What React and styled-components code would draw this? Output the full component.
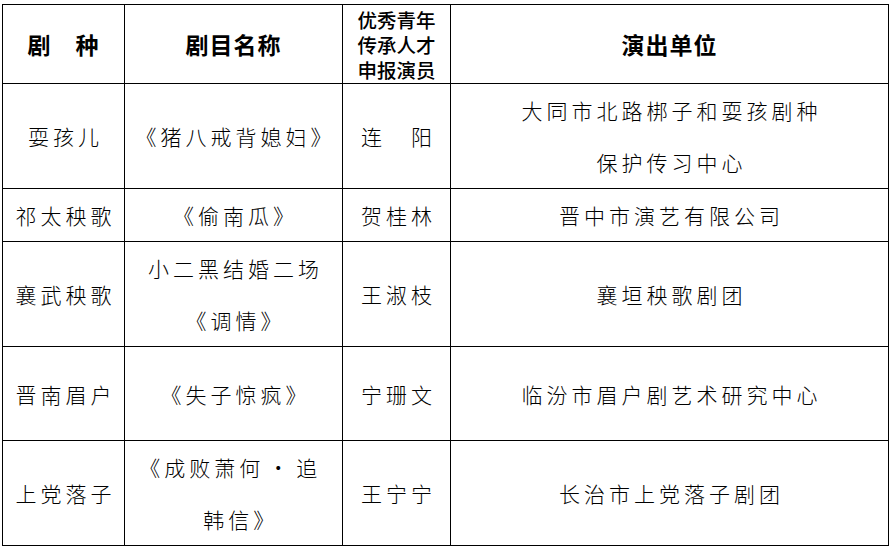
import React from "react";
import styled, { createGlobalStyle } from "styled-components";

const Global = createGlobalStyle`
  html, body { margin: 0; padding: 0; background: #fff; }
  body { font-family: "Noto Sans CJK SC", "Noto Sans", sans-serif; color: #000; }
`;

const Page = styled.div`
  padding: 4px 0 0 2px;
`;

const Table = styled.table`
  border-collapse: collapse;
  table-layout: fixed;
  width: 886px;
`;

const Row = styled.tr`
  height: ${(p) => p.$h}px;
`;

const HeadCell = styled.th`
  border: 1px solid #000;
  padding: 0;
  text-align: center;
  vertical-align: middle;
  font-family: "Noto Sans CJK SC", sans-serif;
  font-weight: 700;
  font-size: ${(p) => (p.$small ? 19.5 : 23)}px;
  line-height: ${(p) => (p.$small ? 25 : 30)}px;
  letter-spacing: ${(p) => (p.$small ? 0 : 1)}px;
  ${(p) => p.$small && "font-weight: 500;"}
`;

const Cell = styled.td`
  border: 1px solid #000;
  padding: 0 0 0 4px;
  text-align: center;
  vertical-align: middle;
  font-family: "Noto Sans CJK SC", sans-serif;
  font-weight: 300;
  font-size: 21px;
  line-height: 52px;
  letter-spacing: 4px;
  font-feature-settings: "halt";
  white-space: nowrap;
`;

const cols = [122, 218, 108, 438];

const rows = [
  { h: 105, a: ["耍孩儿"], b: ["《猪八戒背媳妇》"], c: ["连　阳"], d: ["大同市北路梆子和耍孩剧种", "保护传习中心"] },
  { h: 53, a: ["祁太秧歌"], b: ["《偷南瓜》"], c: ["贺桂林"], d: ["晋中市演艺有限公司"] },
  { h: 105, a: ["襄武秧歌"], b: ["小二黑结婚二场", "《调情》"], c: ["王淑枝"], d: ["襄垣秧歌剧团"] },
  { h: 94, a: ["晋南眉户"], b: ["《失子惊疯》"], c: ["宁珊文"], d: ["临汾市眉户剧艺术研究中心"] },
  { h: 105, a: ["上党落子"], b: ["《成败萧何 · 追", "韩信》"], c: ["王宁宁"], d: ["长治市上党落子剧团"] },
];

const Lines = ({ lines }) =>
  lines.map((l, i) => (
    <React.Fragment key={i}>
      {i > 0 && <br />}
      {l}
    </React.Fragment>
  ));

export default function App() {
  return (
    <Page>
      <Global />
      <Table>
        <colgroup>
          {cols.map((w, i) => (
            <col key={i} style={{ width: w }} />
          ))}
        </colgroup>
        <thead>
          <Row $h={79}>
            <HeadCell>剧　种</HeadCell>
            <HeadCell>剧目名称</HeadCell>
            <HeadCell $small>
              优秀青年
              <br />
              传承人才
              <br />
              申报演员
            </HeadCell>
            <HeadCell>演出单位</HeadCell>
          </Row>
        </thead>
        <tbody>
          {rows.map((r, i) => (
            <Row key={i} $h={r.h}>
              <Cell><Lines lines={r.a} /></Cell>
              <Cell><Lines lines={r.b} /></Cell>
              <Cell><Lines lines={r.c} /></Cell>
              <Cell><Lines lines={r.d} /></Cell>
            </Row>
          ))}
        </tbody>
      </Table>
    </Page>
  );
}
